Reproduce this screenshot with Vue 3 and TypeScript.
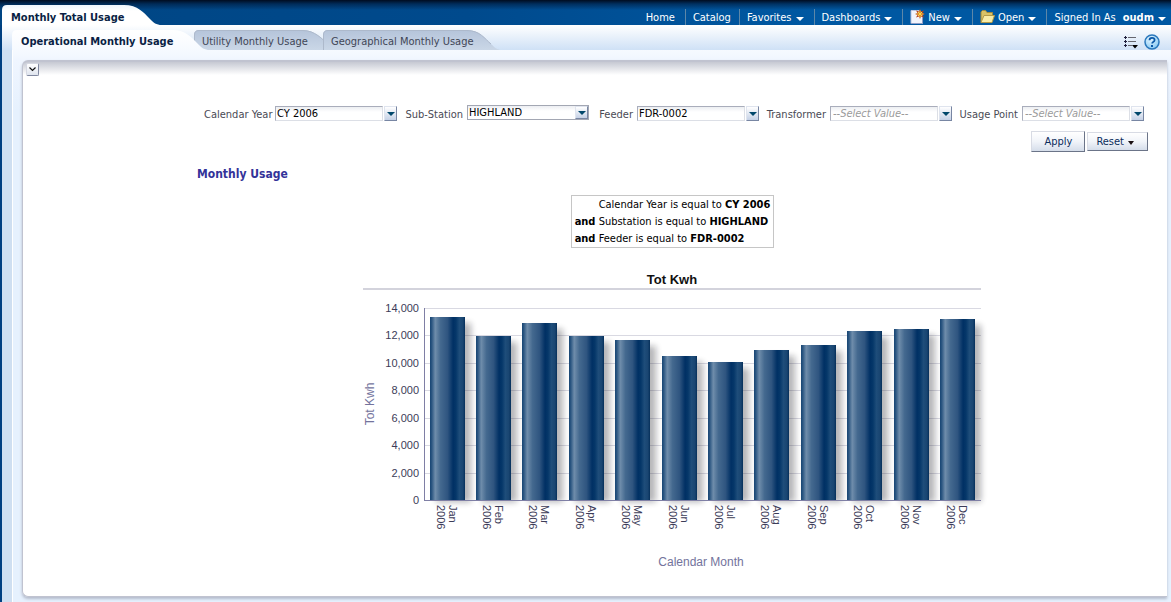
<script setup lang="ts">
import { ref } from 'vue'

interface NavItem { label: string; menu: boolean; icon?: 'new' | 'open' }
interface Filter { id: string; label: string; value: string; empty: boolean; active: boolean }

const navItems: NavItem[] = [
  { label: 'Home', menu: false },
  { label: 'Catalog', menu: false },
  { label: 'Favorites', menu: true },
  { label: 'Dashboards', menu: true },
  { label: 'New', menu: true, icon: 'new' },
  { label: 'Open', menu: true, icon: 'open' },
]

const filters = ref<Filter[]>([
  { id: 'year', label: 'Calendar Year', value: 'CY 2006', empty: false, active: false },
  { id: 'station', label: 'Sub-Station', value: 'HIGHLAND', empty: false, active: true },
  { id: 'feeder', label: 'Feeder', value: 'FDR-0002', empty: false, active: false },
  { id: 'transformer', label: 'Transformer', value: '--Select Value--', empty: true, active: false },
  { id: 'point', label: 'Usage Point', value: '--Select Value--', empty: true, active: false },
])

const criteria = [
  { join: '', field: 'Calendar Year', value: 'CY 2006' },
  { join: 'and', field: 'Substation', value: 'HIGHLAND' },
  { join: 'and', field: 'Feeder', value: 'FDR-0002' },
]

const plot = { left: 61, right: 618, top: 40, bottom: 232 }
const maxValue = 14000
const yOf = (v: number) => Math.round(plot.bottom - (v / maxValue) * (plot.bottom - plot.top))
const ticks = [0, 2000, 4000, 6000, 8000, 10000, 12000, 14000].map((v) => ({
  text: v.toLocaleString('en-US'),
  y: yOf(v),
}))

const usage: [string, number][] = [
  ['Jan', 13340], ['Feb', 11960], ['Mar', 12900], ['Apr', 11960], ['May', 11670], ['Jun', 10500],
  ['Jul', 10060], ['Aug', 10940], ['Sep', 11300], ['Oct', 12320], ['Nov', 12470], ['Dec', 13200],
]
const step = (plot.right - plot.left) / usage.length
const bars = usage.map(([month, value], i) => {
  const x = Math.floor(plot.left + i * step + 6)
  const y = yOf(value)
  return { month, x, y, height: plot.bottom - y }
})
</script>

<template>
  <div class="page">
    <header class="topbar">
      <a href="#" class="page-tab">
        <svg class="tab-shape" width="160" height="20" viewBox="0 0 160 20" aria-hidden="true">
          <defs>
            <linearGradient id="pageTabFill" x1="0" y1="0" x2="0" y2="1">
              <stop offset="0" stop-color="#eef5fd" />
              <stop offset="0.3" stop-color="#ffffff" />
              <stop offset="1" stop-color="#ffffff" />
            </linearGradient>
          </defs>
          <path d="M0 20V5Q0 0 5 0H122C136 0 142 8 147 13C152 18 154 20 160 20Z" fill="url(#pageTabFill)" />
        </svg>
        <span class="tab-text">Monthly Total Usage</span>
      </a>
      <nav class="nav">
        <a v-for="item in navItems" :key="item.label" href="#" class="nav-item">
          <svg v-if="item.icon === 'new'" class="nav-icon" width="15" height="16" viewBox="0 0 15 16" aria-hidden="true">
            <path d="M1 1.500H9L12.500 6V14.500H1Z" fill="#f2f4fb" stroke="#b9c3de" />
            <path d="M1 14.500H12.500V8" fill="none" stroke="#8f9cc4" />
            <path d="M10 0L11 2.500L14 1.500L12.500 4L15 5L12.500 6L14 8.500L11 7.500L10 10L9 7.500L6 8.500L7.500 6L5 5L7.500 4L6 1.500L9 2.500Z" fill="#b5431a" />
            <path d="M10 1.500V8.500M6.500 5H13.500M8 3L12 7M12 3L8 7" stroke="#ffd94a" stroke-width="1" />
          </svg>
          <svg v-if="item.icon === 'open'" class="nav-icon" width="15" height="14" viewBox="0 0 15 14" aria-hidden="true">
            <path d="M1 12.500V2L2.500 0.500H5.500L7 2.500H12.500V5.500" fill="#d9c366" stroke="#a08a3c" />
            <path d="M1 12.500L4 5.500H14.500L12 12.500Z" fill="#f8eda8" stroke="#b39a48" />
          </svg>
          <span>{{ item.label }}</span>
          <span v-if="item.menu" class="caret"></span>
        </a>
        <a href="#" class="nav-item user">
          <span>Signed In As</span>
          <b>oudm</b>
          <span class="caret"></span>
        </a>
      </nav>
    </header>

    <main class="body">
      <div class="tabs-row">
        <nav class="subtabs">
          <a href="#" class="subtab current">
            <svg class="tab-shape" width="198" height="20" viewBox="0 0 198 20" aria-hidden="true">
              <defs>
                <linearGradient id="currentFill" x1="0" y1="0" x2="0" y2="1">
                  <stop offset="0" stop-color="#ffffff" />
                  <stop offset="1" stop-color="#f6faff" />
                </linearGradient>
              </defs>
              <path d="M0 20V5Q0 0 5 0H160C174 0 180 8 185 13C190 18 192 20 198 20Z" fill="url(#currentFill)" />
            </svg>
            <span class="tab-text">Operational Monthly Usage</span>
          </a>
          <a href="#" class="subtab utility">
            <svg class="tab-shape" width="140" height="20" viewBox="0 0 140 20" aria-hidden="true">
              <defs>
                <linearGradient id="idleFill" x1="0" y1="0" x2="0" y2="1">
                  <stop offset="0" stop-color="#b5c4da" />
                  <stop offset="1" stop-color="#cad7e7" />
                </linearGradient>
              </defs>
              <path d="M0 20V5Q0 0 5 0H109C121 0 128 9 135 15L140 20Z" fill="url(#idleFill)" />
              <path d="M0.500 20V5Q0.500 0.500 5 0.500H109C121 0.500 128 9 135 15" fill="none" stroke="#adb9cb" />
            </svg>
            <span class="tab-text">Utility Monthly Usage</span>
          </a>
          <a href="#" class="subtab geo">
            <svg class="tab-shape" width="177" height="20" viewBox="0 0 177 20" aria-hidden="true">
              <path d="M0 20V5Q0 0 5 0H144C157 0 162 9 168 14C172 18 174 19 177 20Z" fill="url(#idleFill)" />
              <path d="M0.500 20V5Q0.500 0.500 5 0.500H144C157 0.500 162 9 168 14" fill="none" stroke="#adb9cb" />
            </svg>
            <span class="tab-text">Geographical Monthly Usage</span>
          </a>
        </nav>
        <div class="tools">
          <button type="button" class="icon-btn" aria-label="Page options">
            <svg width="14" height="14" viewBox="0 0 14 14" aria-hidden="true">
              <path d="M0 2.500H3M0 6.500H3M0 10.500H3" stroke="#1f1f3c" />
              <path d="M1 1H2V4H1ZM1 5H2V8H1ZM1 9H2V12H1Z" fill="#1f1f3c" />
              <path d="M4 2.500H12M4 6.500H12M4 10.500H8" stroke="#66666e" />
              <path d="M8 10H14L11 13.500Z" fill="#000000" />
            </svg>
          </button>
          <button type="button" class="icon-btn" aria-label="Help">
            <svg width="16" height="16" viewBox="0 0 16 16" aria-hidden="true">
              <defs>
                <radialGradient id="helpFill" cx="0.4" cy="0.3" r="0.8">
                  <stop offset="0" stop-color="#e6f6ff" />
                  <stop offset="1" stop-color="#7cc4f2" />
                </radialGradient>
              </defs>
              <circle cx="8" cy="8" r="7" fill="url(#helpFill)" stroke="#2b78bc" stroke-width="1.500" />
              <path d="M5.500 6.200Q5.500 3.800 8 3.800Q10.600 3.800 10.600 6Q10.600 7.200 9.200 8Q8.200 8.600 8.200 9.600" fill="none" stroke="#0a58a8" stroke-width="1.800" />
              <rect x="7" y="11" width="2" height="2" fill="#0a58a8" />
            </svg>
          </button>
        </div>
      </div>

      <div class="frame">
        <section class="panel">
          <button type="button" class="collapse" aria-label="Collapse section">
            <svg width="7" height="5" viewBox="0 0 7 5" aria-hidden="true">
              <path d="M0.500 0.500L3.500 3.500L6.500 0.500" fill="none" stroke="#111111" stroke-width="1.200" />
            </svg>
          </button>

          <form class="prompts" @submit.prevent>
            <div class="filters">
              <template v-for="f in filters" :key="f.id">
                <label :for="f.id">{{ f.label }}</label>
                <div class="combo" :class="{ active: f.active, empty: f.empty }">
                  <select :id="f.id" v-model="f.value">
                    <option>{{ f.value }}</option>
                  </select>
                  <span class="drop"></span>
                </div>
              </template>
            </div>
            <div class="actions">
              <button type="submit" class="btn apply">Apply</button>
              <button type="button" class="btn">Reset<span class="caret dark"></span></button>
            </div>
          </form>

          <section class="report">
            <h2>Monthly Usage</h2>
            <div class="criteria">
              <div v-for="c in criteria" :key="c.field" class="criterion">
                <b class="join">{{ c.join }}</b>
                <span>{{ c.field }} is equal to <b>{{ c.value }}</b></span>
              </div>
            </div>

            <svg class="chart" width="626" height="308" viewBox="0 0 626 308" role="img" aria-label="Tot Kwh by calendar month">
              <defs>
                <linearGradient id="barFill" x1="0" y1="0" x2="1" y2="0">
                  <stop offset="0" stop-color="#174573" />
                  <stop offset="0.05" stop-color="#2b5681" />
                  <stop offset="0.15" stop-color="#6f8dab" />
                  <stop offset="0.3" stop-color="#44698f" />
                  <stop offset="0.5" stop-color="#2f5580" />
                  <stop offset="0.66" stop-color="#003064" />
                  <stop offset="0.74" stop-color="#053769" />
                  <stop offset="0.84" stop-color="#1e4d7a" />
                  <stop offset="0.94" stop-color="#194571" />
                  <stop offset="1" stop-color="#052f5a" />
                </linearGradient>
                <filter id="barShadow" x="-30%" y="-8%" width="170%" height="116%">
                  <feGaussianBlur stdDeviation="3" />
                </filter>
              </defs>
              <text class="chart-title" x="309" y="16">Tot Kwh</text>
              <rect x="0" y="20" width="618" height="2" fill="#d3d3dc" />
              <g v-for="t in ticks" :key="t.text">
                <rect :x="plot.left" :y="t.y" :width="plot.right - plot.left" height="1" fill="#d9d9e2" />
                <text class="tick" x="56" :y="t.y + 4">{{ t.text }}</text>
              </g>
              <g v-for="b in bars" :key="b.month">
                <rect :x="b.x + 6" :y="b.y + 6" width="35" :height="b.height - 4" fill="#101018" opacity="0.3" filter="url(#barShadow)" />
              </g>
              <g v-for="b in bars" :key="b.month">
                <rect :x="b.x" :y="b.y" width="35" :height="b.height" fill="url(#barFill)" />
                <text class="month" :transform="`translate(${b.x + 19} 237) rotate(90)`">{{ b.month }}</text>
                <text class="month" :transform="`translate(${b.x + 7} 237) rotate(90)`">2006</text>
              </g>
              <rect :x="plot.left" :y="plot.top" width="1" :height="plot.bottom - plot.top" fill="#7f7fa5" />
              <rect :x="plot.left" :y="plot.bottom" :width="plot.right - plot.left" height="1" fill="#7f7fa5" />
              <text class="axis" transform="translate(11 136) rotate(-90)">Tot Kwh</text>
              <text class="axis" x="338" y="298">Calendar Month</text>
            </svg>
          </section>
        </section>
      </div>
    </main>
  </div>
</template>

<style>
html,
body {
  height: 100%;
}
body {
  margin: 0;
  background: #003f80;
}
#app {
  height: 100%;
}
</style>

<style scoped>
.page {
  min-height: 100%;
  display: flex;
  flex-direction: column;
  box-sizing: border-box;
  padding-left: 2px;
  background: #003f80;
  font: 11px/17px "DejaVu Sans Condensed", "DejaVu Sans", sans-serif;
  color: #000000;
}
a {
  color: inherit;
  text-decoration: none;
}
.topbar {
  height: 25px;
  margin-left: -2px;
  padding-left: 2px;
  display: flex;
  justify-content: space-between;
  align-items: flex-end;
  background:
    linear-gradient(180deg, #000c20 0, rgba(0, 20, 50, 0.55) 4px, rgba(0, 40, 80, 0) 10px),
    linear-gradient(90deg, #004583 0, #004a8d 40%, #0058a2 70%);
}
.page-tab,
.subtab {
  position: relative;
  height: 20px;
  display: flex;
  align-items: center;
}
.page-tab {
  width: 160px;
  color: #0a1f44;
  font-weight: bold;
}
.page-tab .tab-text {
  padding: 5px 0 0 9px;
}
.tab-shape {
  position: absolute;
  left: 0;
  top: 0;
}
.tab-text {
  position: relative;
  white-space: nowrap;
}
.nav {
  display: flex;
  align-items: center;
  color: #ffffff;
}
.nav-item {
  height: 16px;
  display: flex;
  align-items: center;
  padding: 0 8px 0 7px;
  border-left: 1px solid #5d87a8;
  line-height: 15px;
  white-space: nowrap;
}
.nav-item:first-child {
  border-left: 0;
  padding-right: 10px;
}
.nav-icon {
  margin-right: 3px;
}
.nav-item.user {
  padding-right: 5px;
}
.nav-item.user b {
  margin-left: 7px;
}
.caret {
  width: 0;
  height: 0;
  margin: 3px 2px 0 4px;
  border: 4px solid transparent;
  border-top-color: #ffffff;
  border-bottom: 0;
}
.user .caret {
  margin-right: 0;
}
.body {
  flex: 1;
  display: flex;
  flex-direction: column;
  padding-left: 10px;
  background:
    linear-gradient(180deg, #ffffff 0, #cfe1f6 25px) no-repeat 0 0 / 100% 25px,
    linear-gradient(180deg, #cfdff1 0, #cfdff1 100%);
}
.tabs-row {
  height: 25px;
  display: flex;
  align-items: flex-end;
  justify-content: space-between;
}
.subtabs {
  display: flex;
  color: #3f4656;
}
.subtab.current {
  width: 182px;
  z-index: 1;
  color: #0a1f44;
  font-weight: bold;
}
.subtab.current .tab-text {
  padding-left: 9px;
}
.subtab.utility {
  width: 129px;
}
.subtab.geo {
  width: 177px;
}
.subtab .tab-text {
  padding: 2px 0 0 8px;
}
.tools {
  display: flex;
  align-items: center;
  gap: 6px;
  padding-right: 11px;
}
.icon-btn {
  display: flex;
  padding: 0;
  border: 0;
  background: none;
}
.frame {
  flex: 1;
  display: flex;
  padding: 10px 4px 5px 9px;
  border-left: 1px solid #ffffff;
  background: linear-gradient(180deg, #f6faff 0, #f0f6ff 10px, #e6f1fe 60px);
}
.panel {
  flex: 1;
  min-width: 0;
  border: solid #c0c3d0;
  border-width: 2px 0 1px 1px;
  border-radius: 6px 0 0 6px;
  background: linear-gradient(180deg, #c6c9d3 0, #ffffff 13px);
  box-shadow: 0 2px 3px #b4bbcb;
}
.collapse {
  width: 13px;
  height: 13px;
  margin: 1px 0 0 3px;
  padding: 0;
  display: flex;
  align-items: center;
  justify-content: center;
  border: 1px solid #d5d8e2;
  border-right-color: #8088a0;
  border-bottom-color: #8088a0;
  border-radius: 2px;
  background: linear-gradient(180deg, #ffffff, #dfe4ee);
}
.prompts {
  margin: 28px 19px 0 0;
}
.filters {
  display: grid;
  grid-template-columns: 71px 122px 70px 122px 48px 122px 71px 122px 70px 122px;
  justify-content: end;
  align-items: center;
  padding-right: 4px;
  color: #4a4a55;
}
.filters label {
  padding: 2px 4px 0 0;
  text-align: right;
  white-space: nowrap;
}
.combo {
  position: relative;
  height: 15px;
  display: flex;
}
.combo select {
  flex: 1;
  min-width: 0;
  margin-right: 14px;
  padding: 0 1px;
  box-sizing: border-box;
  appearance: none;
  border: 1px solid #a9adbb;
  border-right-color: #dcdfe6;
  border-bottom-color: #dcdfe6;
  border-radius: 0;
  background: linear-gradient(180deg, #eceef2 0, #ffffff 5px);
  font: inherit;
  line-height: 13px;
  color: #000000;
}
.combo.empty select {
  padding-left: 2px;
  color: #9a9a9a;
  font-style: italic;
}
.drop {
  position: absolute;
  right: 0;
  top: 0;
  width: 13px;
  height: 15px;
  box-sizing: border-box;
  display: flex;
  align-items: center;
  justify-content: center;
  pointer-events: none;
  border: 1px solid #dfe4ee;
  border-right-color: #7886a3;
  border-bottom-color: #7886a3;
  background: linear-gradient(180deg, #ffffff, #c5d1e6);
}
.drop::after {
  content: "";
  border: 4px solid transparent;
  border-top-color: #00476b;
  border-bottom: 0;
}
.combo.active {
  margin-bottom: 2px;
}
.combo.active select {
  margin-right: 0;
  border-color: #a3a7b3;
}
.combo.active .drop {
  right: 1px;
  top: 1px;
  height: 13px;
}
.actions {
  display: flex;
  justify-content: flex-end;
  align-items: center;
  gap: 2px;
  margin-top: 8px;
}
.btn {
  height: 19px;
  display: flex;
  align-items: center;
  padding: 0 8px;
  border: 1px solid #d8dbe4;
  border-right-color: #6b7488;
  border-bottom-color: #6b7488;
  background: linear-gradient(180deg, #ffffff 0, #f1f4f9 50%, #d5ddea 100%);
  font: inherit;
  color: #0b2c5c;
}
.btn.apply {
  height: 21px;
  padding: 0 12px;
}
.caret.dark {
  margin: 3px 5px 0 4px;
  border-width: 4px 3px 0;
  border-top-color: #1a1012;
}
.report {
  margin: 13px 19px 0 174px;
  display: flex;
  flex-direction: column;
  align-items: center;
}
h2 {
  align-self: flex-start;
  margin: 0;
  font-size: 12px;
  line-height: 18px;
  color: #333399;
}
.criteria {
  margin-top: 12px;
  padding: 0 3px;
  border: 1px solid #c6c6c6;
  color: #000000;
}
.criterion {
  display: flex;
  white-space: nowrap;
}
.criterion .join {
  width: 24px;
}
.chart {
  display: block;
  margin: 20px -7px 0 0;
}
.chart text {
  font-family: "Liberation Sans", Arial, sans-serif;
}
.chart .chart-title {
  font: bold 13px "Liberation Sans", Arial, sans-serif;
  text-anchor: middle;
  fill: #111111;
}
.chart .tick {
  font-size: 11px;
  text-anchor: end;
  fill: #3c3c58;
}
.chart .month {
  font-size: 11px;
  fill: #3c3c58;
}
.chart .axis {
  font-size: 12px;
  text-anchor: middle;
  fill: #73739c;
}
</style>
